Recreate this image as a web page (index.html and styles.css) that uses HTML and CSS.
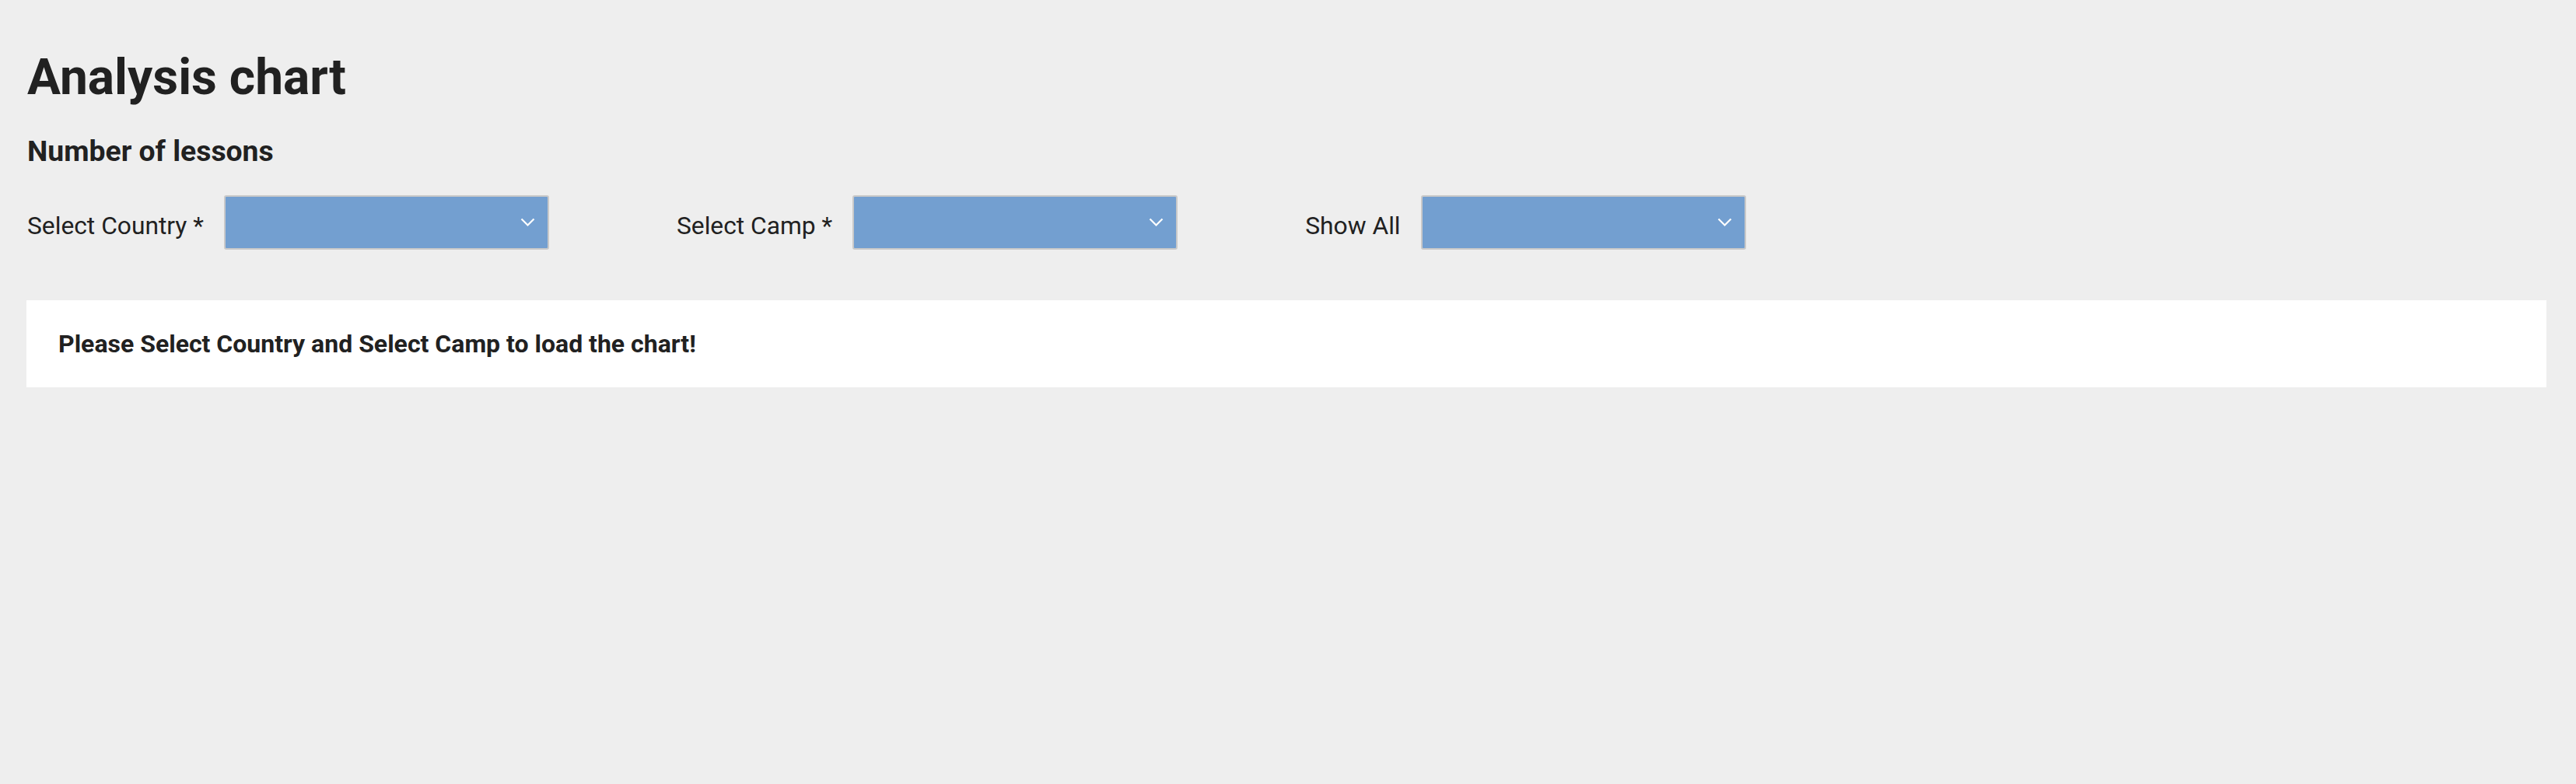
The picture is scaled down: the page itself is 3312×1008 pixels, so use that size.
FILE: index.html
```html
<!DOCTYPE html>
<html lang="en">
<head>
<meta charset="utf-8">
<title>Analysis chart</title>
<link rel="stylesheet" href="styles.css">
</head>
<body>
<div class="page">
  <h1 class="title">Analysis chart</h1>
  <h2 class="subtitle">Number of lessons</h2>
  <div class="filters">
    <div class="filter">
      <label class="filter-label">Select Country *</label>
      <div class="select">
        <svg class="chevron" width="19" height="12" viewBox="0 0 19 12"><path d="M1.5 1.5 L9.5 9.5 L17.5 1.5" fill="none" stroke="#ffffff" stroke-width="2.2"/></svg>
      </div>
    </div>
    <div class="filter">
      <label class="filter-label">Select Camp *</label>
      <div class="select">
        <svg class="chevron" width="19" height="12" viewBox="0 0 19 12"><path d="M1.5 1.5 L9.5 9.5 L17.5 1.5" fill="none" stroke="#ffffff" stroke-width="2.2"/></svg>
      </div>
    </div>
    <div class="filter">
      <label class="filter-label">Show All</label>
      <div class="select">
        <svg class="chevron" width="19" height="12" viewBox="0 0 19 12"><path d="M1.5 1.5 L9.5 9.5 L17.5 1.5" fill="none" stroke="#ffffff" stroke-width="2.2"/></svg>
      </div>
    </div>
  </div>
  <div class="message">Please Select Country and Select Camp to load the chart!</div>
</div>
</body>
</html>
```

FILE: styles.css
```css
html, body {
  margin: 0;
  padding: 0;
  background: #eeeeee;
}

body {
  font-family: Roboto, "Liberation Sans", Arial, sans-serif;
  color: #212121;
  min-height: 1008px;
}

.page {
  padding: 60px 38px 0 34px;
}

.title {
  margin: 0;
  font-size: 64px;
  line-height: 80px;
  font-weight: 700;
  padding-left: 1px;
}

.subtitle {
  margin: 32px 0 0 0;
  font-size: 37.3px;
  line-height: 44px;
  font-weight: 700;
  padding-left: 1px;
}

.filters {
  display: flex;
  align-items: center;
  gap: 163px;
  margin-top: 35px;
}

.filter {
  display: flex;
  align-items: center;
  gap: 26px;
}

.filter-label {
  font-size: 31.75px;
  line-height: 38px;
  font-weight: 400;
  padding-top: 10px;
  padding-left: 1px;
}

.select {
  box-sizing: border-box;
  width: 418px;
  height: 70px;
  background: #739fd0;
  border: 2px solid #c9c9c9;
  border-radius: 3px;
  display: flex;
  align-items: center;
  justify-content: flex-end;
  padding-right: 16px;
}

.chevron {
  display: block;
}

.message {
  margin-top: 65px;
  height: 112px;
  background: #ffffff;
  display: flex;
  align-items: center;
  padding: 0 41px;
  font-size: 32px;
  line-height: 38px;
  font-weight: 700;
}
```
